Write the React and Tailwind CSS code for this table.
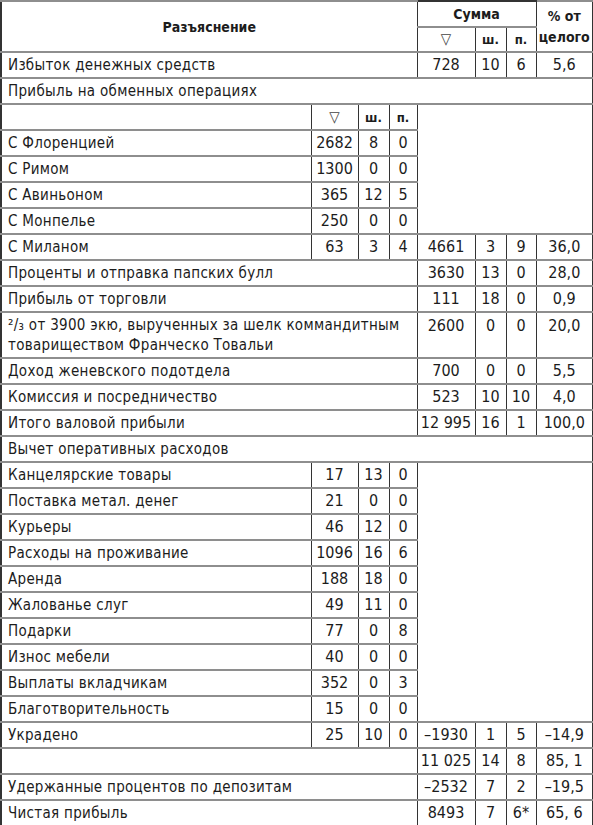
const F = { fontFamily: '"Liberation Sans Narrow", "DejaVu Sans Condensed", "Liberation Sans", sans-serif' }

const bd = 'border-x border-x-[#333] border-y-2 border-y-[#8e8e8e] p-0 text-center align-middle'
const cell = bd + ' text-[16px]'
const head = bd + ' text-[13px] font-bold'
const lab = 'border-x border-x-[#333] border-y-2 border-y-[#8e8e8e] py-0 pl-[6px] pr-2 text-left align-middle text-[15px] tracking-[0.3px]'

function Nums({ vals }) {
  return vals.map((v, i) => <td key={i} className={cell}>{v}</td>)
}

function Section({ children }) {
  return (
    <tr className="h-[26px]">
      <td colSpan={8} className={lab}>{children}</td>
    </tr>
  )
}

function SumRow({ label, sum }) {
  return (
    <tr className="h-[26px]">
      <td colSpan={4} className={lab}>{label}</td>
      <Nums vals={sum} />
    </tr>
  )
}

function SubRow({ label, sub, sum, span }) {
  return (
    <tr className="h-[26px]">
      <td className={lab}>{label}</td>
      <Nums vals={sub} />
      {span && <td colSpan={4} rowSpan={span} className={bd}></td>}
      {sum && <Nums vals={sum} />}
    </tr>
  )
}

export default function App() {
  return (
    <div className="bg-white w-[593px] min-h-[825px] text-[#1c1c1c]" style={F}>
      <table className="table-fixed border-collapse w-[592px] leading-none border-2 border-[#333]">
        <colgroup>
          <col className="w-[310px]" />
          <col className="w-[47px]" />
          <col className="w-[31px]" />
          <col className="w-[28px]" />
          <col className="w-[58px]" />
          <col className="w-[31px]" />
          <col className="w-[30px]" />
          <col className="w-[57px]" />
        </colgroup>
        <tbody>
          <tr className="h-[26px]">
            <td colSpan={4} rowSpan={2} className={bd + ' text-[14px] font-bold'}>Разъяснение</td>
            <td colSpan={3} className="border-x border-x-[#333] border-t-2 border-t-[#333] border-b border-b-[#aaa] p-0 text-center text-[14px] font-bold">Сумма</td>
            <td rowSpan={2} className={bd + ' text-[14px] font-bold leading-[21px]'}>% от<br />целого</td>
          </tr>
          <tr className="h-[25px]">
            <td className={bd + ' text-[15px] text-[#444]'}>▽</td>
            <td className={head}>ш.</td>
            <td className={head}>п.</td>
          </tr>
          <SumRow label="Избыток денежных средств" sum={['728', '10', '6', '5,6']} />
          <Section>Прибыль на обменных операциях</Section>
          <tr className="h-[26px]">
            <td className={lab}></td>
            <td className={bd + ' text-[15px] text-[#444]'}>▽</td>
            <td className={head}>ш.</td>
            <td className={head}>п.</td>
            <td colSpan={4} rowSpan={5} className={bd}></td>
          </tr>
          <SubRow label="С Флоренцией" sub={['2682', '8', '0']} />
          <SubRow label="С Римом" sub={['1300', '0', '0']} />
          <SubRow label="С Авиньоном" sub={['365', '12', '5']} />
          <SubRow label="С Монпелье" sub={['250', '0', '0']} />
          <SubRow label="С Миланом" sub={['63', '3', '4']} sum={['4661', '3', '9', '36,0']} />
          <SumRow label="Проценты и отправка папских булл" sum={['3630', '13', '0', '28,0']} />
          <SumRow label="Прибыль от торговли" sum={['111', '18', '0', '0,9']} />
          <tr className="h-[46px]">
            <td colSpan={4} className={lab + ' leading-[20px]'}>
              ²/₃ от 3900 экю, вырученных за шелк коммандитным<br />товариществом Франческо Товальи
            </td>
            {['2600', '0', '0', '20,0'].map((v, i) => (
              <td key={i} className={cell + ' align-top pt-[5px]'}>{v}</td>
            ))}
          </tr>
          <SumRow label="Доход женевского подотдела" sum={['700', '0', '0', '5,5']} />
          <SumRow label="Комиссия и посредничество" sum={['523', '10', '10', '4,0']} />
          <SumRow label="Итого валовой прибыли" sum={['12 995', '16', '1', '100,0']} />
          <Section>Вычет оперативных расходов</Section>
          <SubRow label="Канцелярские товары" sub={['17', '13', '0']} span={10} />
          <SubRow label="Поставка метал. денег" sub={['21', '0', '0']} />
          <SubRow label="Курьеры" sub={['46', '12', '0']} />
          <SubRow label="Расходы на проживание" sub={['1096', '16', '6']} />
          <SubRow label="Аренда" sub={['188', '18', '0']} />
          <SubRow label="Жалованье слуг" sub={['49', '11', '0']} />
          <SubRow label="Подарки" sub={['77', '0', '8']} />
          <SubRow label="Износ мебели" sub={['40', '0', '0']} />
          <SubRow label="Выплаты вкладчикам" sub={['352', '0', '3']} />
          <SubRow label="Благотворительность" sub={['15', '0', '0']} />
          <SubRow label="Украдено" sub={['25', '10', '0']} sum={['–1930', '1', '5', '–14,9']} />
          <SumRow label="" sum={['11 025', '14', '8', '85, 1']} />
          <SumRow label="Удержанные процентов по депозитам" sum={['–2532', '7', '2', '–19,5']} />
          <SumRow label="Чистая прибыль" sum={['8493', '7', '6*', '65, 6']} />
        </tbody>
      </table>
    </div>
  )
}
